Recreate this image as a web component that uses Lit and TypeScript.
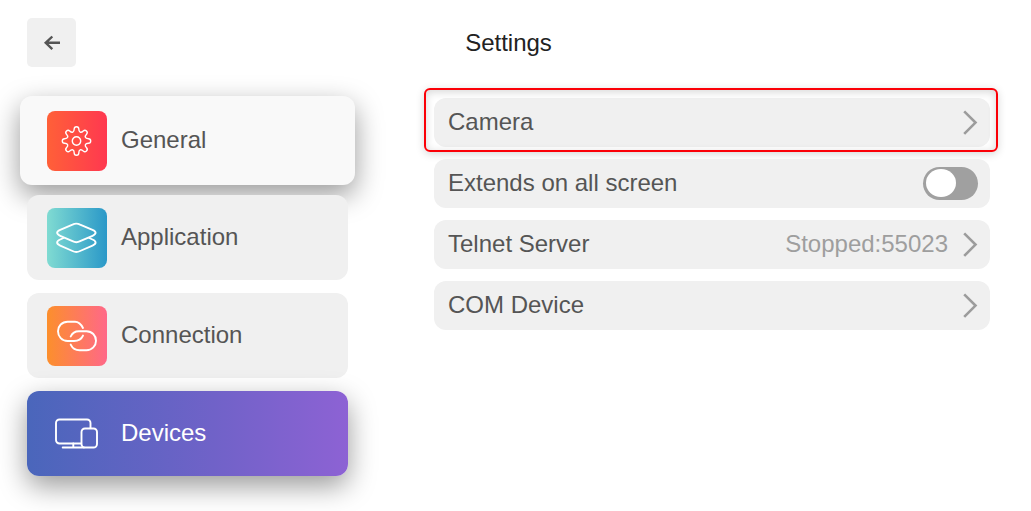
import { LitElement, html, css, svg, nothing } from "lit";
import { customElement, property, state } from "lit/decorators.js";
import { classMap } from "lit/directives/class-map.js";

type IconName = "general" | "application" | "connection" | "devices";

/* Eight-toothed cog outline, centred on the origin. */
const cogPath = (): string => {
  const turn = (x: number, y: number, step: number): string => {
    const a = (step * Math.PI) / 4;
    const px = x * Math.cos(a) - y * Math.sin(a);
    const py = x * Math.sin(a) + y * Math.cos(a);
    return `${px.toFixed(2)} ${py.toFixed(2)}`;
  };
  let d = `M${turn(-2.3, -11.9, 0)}`;
  for (let i = 0; i < 8; i++) {
    d += `A2.3 2.3 0 0 1 ${turn(2.3, -11.9, i)}`;
    d += `C${turn(2.3, -8.6, i)} ${turn(-2.3, -8.6, i + 1)} ${turn(-2.3, -11.9, i + 1)}`;
  }
  return d + "Z";
};

const icons = {
  general: svg`
    <g transform="translate(29.5 30)" stroke-width="1.4">
      <path d=${cogPath()} />
      <circle r="4.2" />
    </g>`,
  application: svg`
    <path d="M25.500 16.600Q29.300 14.600 33.100 16.600L45.500 21.800C49.600 23.600 49.600 26 45.500 27.800L33.100 33.200Q29.300 35.200 25.500 33.200L13.200 27.800C9.100 26 9.100 23.600 13.200 21.800Z" />
    <path d="M16.500 30L13.200 31.500C9.100 33.300 9.100 35.900 13.200 37.700L25.500 43Q29.300 45 33.100 43L45.500 37.700C49.600 35.900 49.600 33.300 45.500 31.500L42.200 30" />`,
  connection: svg`
    <path d="M36 22C34 18 31.500 15.700 28 15.700H20.600C15 15.700 11 20 11 25.300S15 35 20.600 35H27C31.500 35 34.500 33 36 29.600" />
    <path d="M23.700 30.500C25.200 27 28 25.200 32 25.200H39.500C45 25.200 49 29.500 49 34.700S45 44.300 39.500 44.300H32.500C28.500 44.300 25.500 42.300 23.700 38.600" />`,
  devices: svg`
    <path d="M43.500 24V19A3.500 3.500 0 0 0 40 15.500H12.500A3.500 3.500 0 0 0 9 19V36A3.500 3.500 0 0 0 12.500 39.500H34" />
    <rect x="34.500" y="24.500" width="15.500" height="19" rx="3.500" />
    <path d="M15.700 43.500H37M26.300 39.500V43.500" />`,
};

@customElement("nav-card")
class NavCard extends LitElement {
  @property() icon: IconName = "general";
  @property() label = "";
  @property({ type: Boolean }) raised = false;
  @property({ type: Boolean }) selected = false;

  static styles = css`
    :host {
      display: block;
    }
    :host([raised]) {
      margin: -1px -7px -3px;
    }
    .card {
      box-sizing: border-box;
      width: 100%;
      min-height: 85px;
      display: flex;
      align-items: center;
      gap: 14px;
      padding: 12px 20px;
      border: 0;
      border-radius: 12px;
      background: #f0f0f0;
      color: #555;
      font: 24px/28px "Liberation Sans", Arial, sans-serif;
      text-align: left;
      cursor: pointer;
    }
    .raised {
      min-height: 89px;
      padding: 12px 27px;
      background: #f9f9f9;
      box-shadow: 0 10px 28px rgba(0, 0, 0, 0.4);
    }
    .selected {
      background: linear-gradient(90deg, #4a66bb, #7062c8 58%, #8d62d4);
      color: #fff;
      box-shadow: 0 10px 28px rgba(0, 0, 0, 0.4);
    }
    .label {
      padding-bottom: 2px;
    }
    .tile {
      flex: none;
      width: 60px;
      height: 60px;
      border-radius: 8px;
    }
    .tile svg {
      display: block;
    }
    .general {
      background: linear-gradient(90deg, #ff6038, #ff3850);
    }
    .application {
      background: linear-gradient(90deg, #80dbd2, #2a98c8);
    }
    .connection {
      background: linear-gradient(90deg, #fc8f2c, #ff6888);
    }
  `;

  render() {
    return html`<button
      type="button"
      class=${classMap({ card: true, raised: this.raised, selected: this.selected })}
      aria-current=${this.selected ? "page" : nothing}
    >
      <span class="tile ${this.icon}">
        <svg width="60" height="60" viewBox="0 0 60 60" fill="none" stroke="#fff"
          stroke-width="1.9" stroke-linecap="round" stroke-linejoin="round" aria-hidden="true">
          ${icons[this.icon]}
        </svg>
      </span>
      <span class="label">${this.label}</span>
    </button>`;
  }
}

@customElement("app-root")
class AppRoot extends LitElement {
  @state() private extended = false;

  static styles = css`
    :host {
      display: block;
      box-sizing: border-box;
      min-height: 100vh;
      padding: 18px 41px 35px 27px;
      background: #fff;
      color: #555;
      font: 24px/28px "Liberation Sans", Arial, sans-serif;
    }
    .header {
      display: grid;
      grid-template-columns: 1fr auto 1fr;
      align-items: center;
      margin-bottom: 30px;
    }
    .back {
      width: 49px;
      height: 49px;
      padding: 0;
      border: 0;
      border-radius: 5px;
      background: #f0f0f0;
      cursor: pointer;
    }
    .back svg,
    .chevron {
      display: block;
    }
    .title {
      margin: 0;
      color: #222;
      font: inherit;
    }
    .body {
      display: grid;
      grid-template-columns: minmax(0, 321fr) minmax(0, 556fr);
      gap: 86px;
      align-items: start;
    }
    .nav {
      display: grid;
      gap: 13px;
    }
    .list {
      display: grid;
      gap: 12px;
      padding-top: 1px;
    }
    .row {
      position: relative;
      box-sizing: border-box;
      width: 100%;
      min-height: 49px;
      display: flex;
      align-items: center;
      gap: 14px;
      padding: 8px 12px 8px 14px;
      border: 0;
      border-radius: 12px;
      background: #f0f0f0;
      color: inherit;
      font: inherit;
      text-align: left;
      cursor: pointer;
    }
    .name,
    .value {
      padding-bottom: 2px;
    }
    .name {
      flex: 1;
    }
    .value {
      color: #9e9e9e;
    }
    .marked::after {
      content: "";
      position: absolute;
      inset: -10px -8px -5px -10px;
      border: 2px solid #fb0007;
      border-radius: 6px;
      box-shadow:
        0 2px 8px rgba(0, 0, 0, 0.16),
        inset 0 2px 8px rgba(0, 0, 0, 0.16);
      pointer-events: none;
    }
    .switch {
      appearance: none;
      box-sizing: border-box;
      width: 55px;
      height: 33px;
      margin: 0;
      padding: 2px 3px;
      display: flex;
      border-radius: 17px;
      background: #a0a0a0;
      cursor: pointer;
    }
    .switch::before {
      content: "";
      width: 30px;
      height: 28px;
      border-radius: 50%;
      background: #fff;
    }
    .switch:checked {
      justify-content: flex-end;
      background: #7062c8;
    }
  `;

  private chevron() {
    return html`<svg class="chevron" width="16" height="26" viewBox="0 0 16 26" fill="none"
      stroke="#9c9c9c" stroke-width="2.6" aria-hidden="true">
      <path d="M2.200 1.300L13.500 12.600L2.200 23.900" />
    </svg>`;
  }

  render() {
    return html`
      <header class="header">
        <button class="back" type="button" aria-label="Back">
          <svg width="49" height="49" viewBox="0 0 49 49" fill="none" stroke="#555"
            stroke-width="2.4" aria-hidden="true">
            <path d="M33 24.800H18.500M25.300 18.500L18.700 24.800L25.300 31.100" />
          </svg>
        </button>
        <h1 class="title">Settings</h1>
      </header>
      <div class="body">
        <nav class="nav">
          <nav-card icon="general" label="General" raised></nav-card>
          <nav-card icon="application" label="Application"></nav-card>
          <nav-card icon="connection" label="Connection"></nav-card>
          <nav-card icon="devices" label="Devices" selected></nav-card>
        </nav>
        <main class="list">
          <button class="row marked" type="button">
            <span class="name">Camera</span>${this.chevron()}
          </button>
          <label class="row">
            <span class="name">Extends on all screen</span>
            <input class="switch" type="checkbox" .checked=${this.extended}
              @change=${(e: Event) => (this.extended = (e.target as HTMLInputElement).checked)} />
          </label>
          <button class="row" type="button">
            <span class="name">Telnet Server</span>
            <span class="value">Stopped:55023</span>${this.chevron()}
          </button>
          <button class="row" type="button">
            <span class="name">COM Device</span>${this.chevron()}
          </button>
        </main>
      </div>
    `;
  }
}
